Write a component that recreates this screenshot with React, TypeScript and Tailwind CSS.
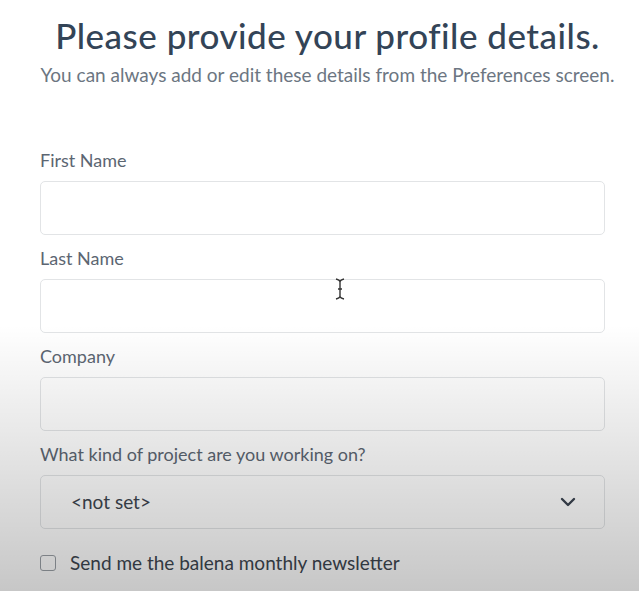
import { ChevronDown } from "lucide-react";

const font = { fontFamily: "Lato, 'Open Sans', sans-serif" };

function Field({ label }: { label: string }) {
  return (
    <div className="flex flex-col">
      <label className="h-[22px] text-[18px] leading-[22px] text-[#5c6672]">{label}</label>
      <input
        type="text"
        className="mt-[10px] h-[54px] w-full rounded-[5px] border border-[#e2e4e6] bg-white px-4 outline-none"
      />
    </div>
  );
}

export default function App() {
  return (
    <div className="relative h-[591px] w-[639px] overflow-hidden bg-white" style={font}>
      <div className="flex flex-col px-[40px] pt-[14px]">
        <div className="-ml-[24px] -mr-[40px] flex flex-col">
          <h1 className="text-center text-[35px] font-medium leading-[42px] tracking-[0.5px] text-[#334457]">
            Please provide your profile details.
          </h1>
          <p className="mt-[7px] text-center text-[19px] leading-[24px] text-[#6c7682]">
            You can always add or edit these details from the Preferences screen.
          </p>
        </div>

        <div className="mt-[62px] flex w-[565px] flex-col gap-[12px]">
          <Field label="First Name" />
          <Field label="Last Name" />
          <Field label="Company" />
          <div className="flex flex-col">
            <label className="h-[22px] text-[18px] leading-[22px] text-[#5c6672]">
              What kind of project are you working on?
            </label>
            <div className="mt-[10px] flex h-[54px] items-center justify-between rounded-[5px] border border-[#e2e4e6] bg-white pl-[30px] pr-[24px]">
              <span className="text-[19px] text-[#3d4650]">&lt;not set&gt;</span>
              <ChevronDown size={24} strokeWidth={2.4} className="text-[#3a4350]" />
            </div>
          </div>
          <label className="mt-[11px] flex h-[22px] items-center gap-[14px]">
            <span className="h-[16px] w-[16px] shrink-0 rounded-[3px] border-[1.5px] border-[#9aa0a6] bg-white" />
            <span className="text-[19px] leading-[22px] text-[#3d4650]">
              Send me the balena monthly newsletter
            </span>
          </label>
        </div>
      </div>

      {/* cursor */}
      <svg
        className="pointer-events-none absolute left-[334px] top-[277px]"
        width="12"
        height="24"
        viewBox="0 0 12 24"
      >
        <path d="M2 2 Q6 3 6 5 V19 Q6 21 2 22 M10 2 Q6 3 6 5 M6 19 Q6 21 10 22 M4 12 H8" stroke="#333" strokeWidth="1.4" fill="none" />
      </svg>

      {/* video shade */}
      <div className="pointer-events-none absolute inset-x-0 bottom-0 top-[325px] bg-gradient-to-b from-black/0 to-black/[0.22]" />
    </div>
  );
}
